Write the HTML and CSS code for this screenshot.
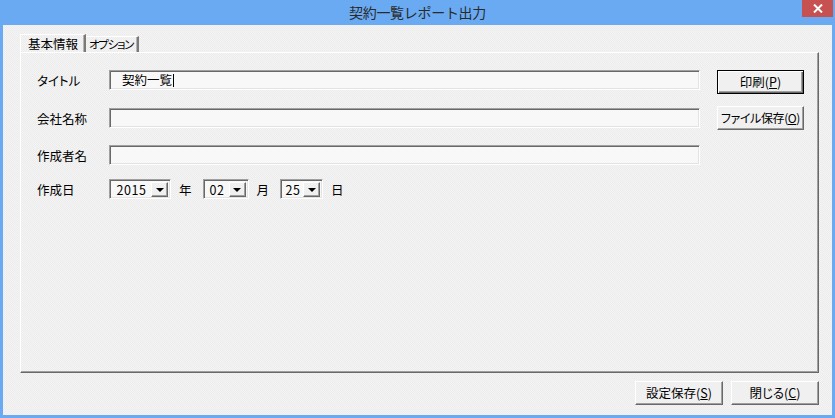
FILE: index.html
```html
<!DOCTYPE html>
<html lang="ja">
<head>
    <meta charset="UTF-8">
    <title>契約一覧レポート出力</title>
    <link rel="stylesheet" href="styles.css">
</head>
<body>
    <div class="window">
        <div class="titlebar">
            <span></span>
            <div class="title">契約一覧レポート出力</div>
            <div class="close-cell">
                <div class="close">
                    <svg width="10" height="9" viewBox="0 0 10 9">
                        <path d="M1 0.5 L9 8.5 M9 0.5 L1 8.5" stroke="#fff" stroke-width="2" fill="none"/>
                    </svg>
                </div>
            </div>
        </div>

        <div class="client">
            <div class="tabs">
                <div class="tab active">基本情報</div>
                <div class="tab">オプション</div>
            </div>

            <div class="panel">
                <div class="fields">
                    <div class="row">
                        <span class="label">タイトル</span>
                        <div class="textbox">契約一覧<span class="caret"></span></div>
                    </div>
                    <div class="row row-2">
                        <span class="label">会社名称</span>
                        <div class="textbox"></div>
                    </div>
                    <div class="row row-3">
                        <span class="label">作成者名</span>
                        <div class="textbox"></div>
                    </div>
                    <div class="row row-date">
                        <span class="label">作成日</span>
                        <div class="combo combo-year">
                            <span class="combo-value">2015</span>
                            <span class="combo-btn"><i class="arrow"></i></span>
                        </div>
                        <span class="unit">年</span>
                        <div class="combo combo-month">
                            <span class="combo-value">02</span>
                            <span class="combo-btn"><i class="arrow"></i></span>
                        </div>
                        <span class="unit">月</span>
                        <div class="combo combo-day">
                            <span class="combo-value">25</span>
                            <span class="combo-btn"><i class="arrow"></i></span>
                        </div>
                        <span class="unit">日</span>
                    </div>
                </div>

                <div class="actions">
                    <button class="btn btn-default">印刷(<u>P</u>)</button>
                    <button class="btn btn-tight">ファイル保存(<u>O</u>)</button>
                </div>
            </div>

            <div class="footer">
                <button class="btn btn-wide">設定保存(<u>S</u>)</button>
                <button class="btn btn-wide">閉じる(<u>C</u>)</button>
            </div>
        </div>
    </div>
</body>
</html>
```

FILE: styles.css
```css
body {
    margin: 0;
    font-family: "Noto Sans CJK JP", "Liberation Sans", sans-serif;
    font-size: 12px;
    color: #000;
}
.window {
    width: 835px;
    height: 418px;
    box-sizing: border-box;
    background: #6aaaf2;
    padding: 0 3px 3px 3px;
    display: flex;
    flex-direction: column;
}
.titlebar {
    height: 25px;
    flex: none;
    display: grid;
    grid-template-columns: 1fr auto 1fr;
    align-items: start;
}
.title {
    font-size: 14px;
    line-height: 24px;
    color: #2a2a2a;
    letter-spacing: -0.3px;
}
.close-cell {
    display: flex;
    justify-content: flex-end;
    margin-right: -1px;
}
.close {
    width: 31px;
    height: 17px;
    background: #c75050;
    display: flex;
    align-items: center;
    justify-content: center;
}
.client {
    flex: 1;
    background: repeating-conic-gradient(#f4f4f4 0 25%, #ececec 0 50%) 0 0 / 2px 2px;
    padding: 9px 13px 0 17px;
    display: flex;
    flex-direction: column;
    font-feature-settings: "palt";
}
.tabs {
    display: flex;
    align-items: flex-end;
    height: 18px;
}
.tab {
    box-sizing: border-box;
    height: 16px;
    line-height: 14px;
    padding: 0 4px 0 3px;
    font-size: 11.5px;
    letter-spacing: -1.3px;
    white-space: nowrap;
    border-top: 1px solid #fff;
    border-right: 2px solid #7a7a7a;
    box-shadow: inset -1px 0 #b4b4b4;
}
.tab.active {
    height: 18px;
    line-height: 17px;
    padding: 0 6px 0 7px;
    letter-spacing: 0;
    border-left: 1px solid #fff;
    font-size: 12.5px;
}
.panel {
    box-sizing: border-box;
    height: 321px;
    border-top: 1px solid #fff;
    border-left: 1px solid #fff;
    border-right: 1px solid #696969;
    border-bottom: 1px solid #696969;
    box-shadow: inset -1px -1px #a0a0a0;
    padding: 17px 0 0 16px;
    display: flex;
    align-items: flex-start;
}
.fields {
    display: flex;
    flex-direction: column;
    width: 663px;
}
.row {
    display: flex;
    align-items: center;
    height: 20px;
}
.row-2 { margin-top: 18px; }
.row-3 { margin-top: 17px; }
.row-date { margin-top: 14px; }
.label {
    width: 72px;
    flex: none;
    font-size: 12.5px;
}
.textbox {
    box-sizing: border-box;
    width: 591px;
    height: 20px;
    background: #f8f8f8;
    border-top: 1px solid #a0a0a0;
    border-left: 1px solid #a0a0a0;
    border-right: 1px solid #fff;
    border-bottom: 1px solid #fff;
    box-shadow: inset 1px 1px #696969, inset -1px -1px #e3e3e3;
    padding-left: 12px;
    font-size: 12.5px;
    line-height: 18px;
    display: flex;
    align-items: center;
}
.caret {
    width: 1px;
    height: 13px;
    background: #000;
    margin-left: 1px;
}
.combo {
    box-sizing: border-box;
    height: 20px;
    background: #f8f8f8;
    border-top: 1px solid #a0a0a0;
    border-left: 1px solid #a0a0a0;
    border-right: 1px solid #fff;
    border-bottom: 1px solid #fff;
    box-shadow: inset 1px 1px #696969, inset -1px -1px #e3e3e3;
    display: flex;
    align-items: center;
    padding: 2px;
}
.combo-year { width: 62px; }
.combo-month { width: 46px; }
.combo-day { width: 43px; }
.combo-value {
    flex: 1;
    text-align: center;
    font-size: 12.5px;
    letter-spacing: 0.6px;
}
.combo-btn {
    box-sizing: border-box;
    width: 17px;
    height: 15px;
    background: #f0f0f0;
    border-top: 1px solid #fff;
    border-left: 1px solid #fff;
    border-right: 1px solid #696969;
    border-bottom: 1px solid #696969;
    box-shadow: inset -1px -1px #a0a0a0;
    display: flex;
    align-items: center;
    justify-content: center;
}
.arrow {
    width: 0;
    height: 0;
    border-left: 4px solid transparent;
    border-right: 4px solid transparent;
    border-top: 4px solid #000;
    margin-top: 1px;
}
.unit {
    margin: 0 11px 0 8px;
    font-size: 12.5px;
}
.actions {
    display: flex;
    flex-direction: column;
    gap: 12px;
    margin-left: 17px;
}
.btn {
    box-sizing: border-box;
    width: 87px;
    height: 24px;
    font-family: inherit;
    font-size: 12.5px;
    font-feature-settings: "palt";
    white-space: nowrap;
    color: #000;
    background: #f0f0f0;
    border-top: 1px solid #fff;
    border-left: 1px solid #fff;
    border-right: 1px solid #696969;
    border-bottom: 1px solid #696969;
    box-shadow: inset -1px -1px #a0a0a0;
    padding: 0;
    line-height: 20px;
}
.btn-tight {
    font-size: 12px;
    letter-spacing: -0.4px;
}
.btn u {
    text-underline-offset: 1px;
}
.btn-default {
    border: 1px solid #000;
    box-shadow: inset 1px 1px #fff, inset -1px -1px #696969, inset -2px -2px #a0a0a0;
}
.btn-wide {
    width: 88px;
}
.footer {
    display: flex;
    justify-content: flex-end;
    gap: 8px;
    margin-top: 8px;
}
```
